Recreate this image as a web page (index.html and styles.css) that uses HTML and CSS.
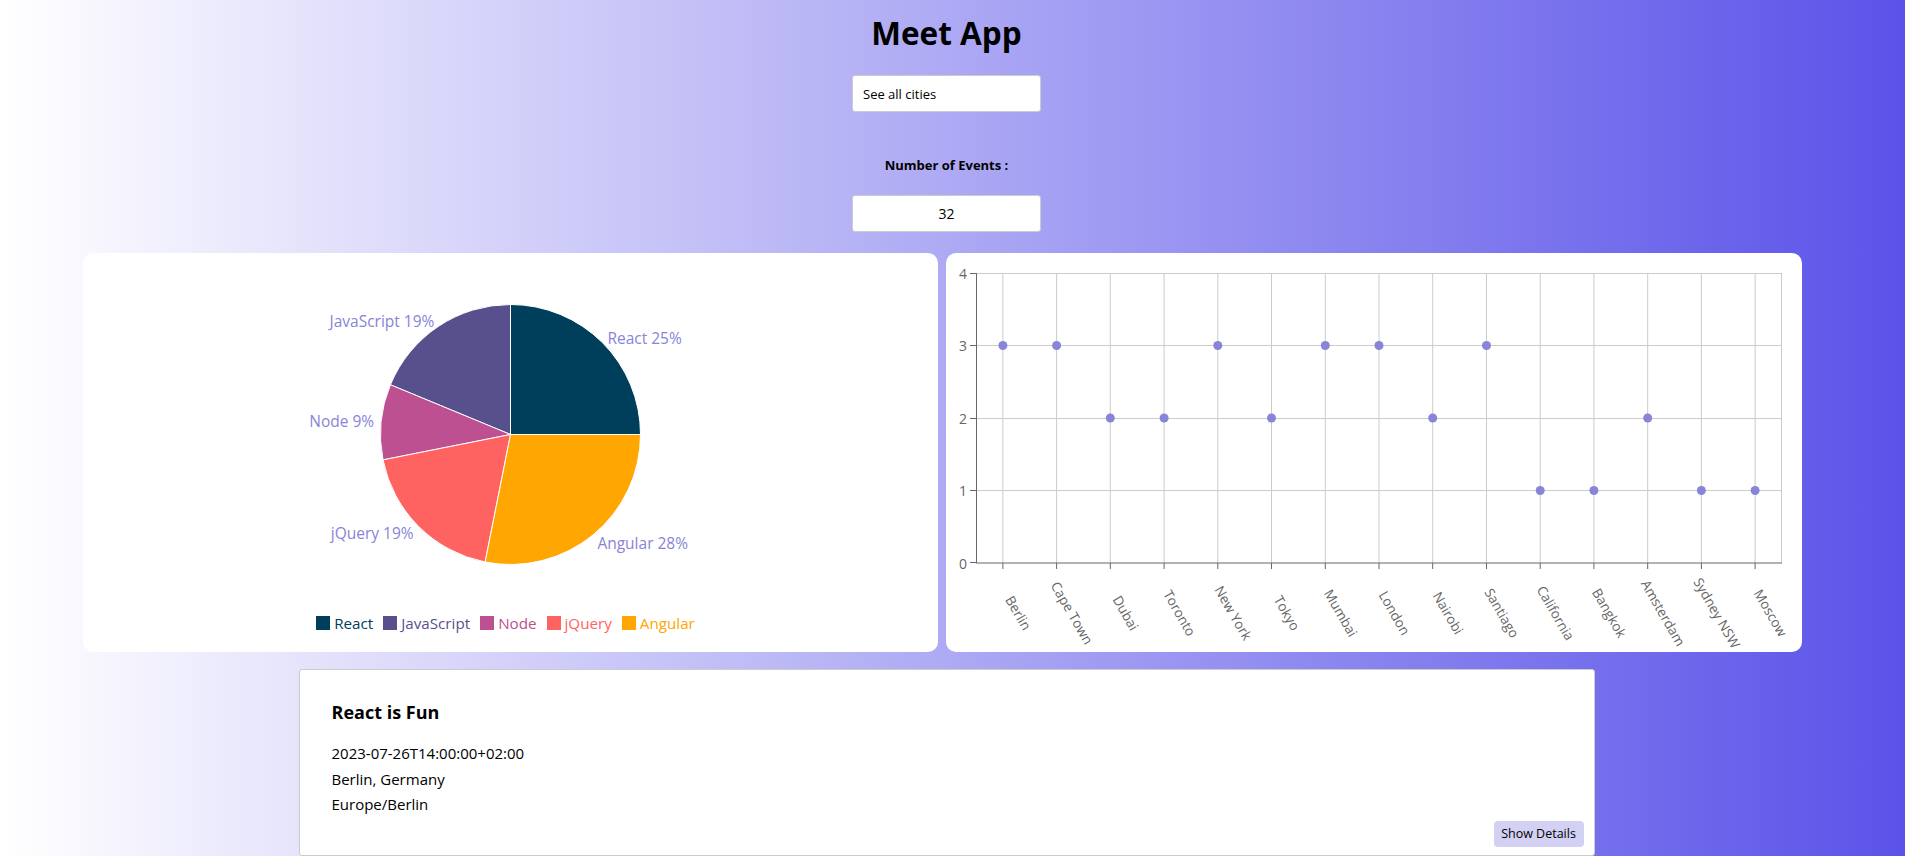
FILE: index.html
```html
<!DOCTYPE html>
<html lang="en">
<head>
<meta charset="utf-8">
<title>Meet App</title>
<link rel="stylesheet" href="styles.css">
</head>
<body>
<div class="app">
  <h1 class="title">Meet App</h1>
  <div class="city-search">
    <input class="city-input" type="text" value="See all cities">
  </div>
  <div class="noe">
    <label class="noe-label">Number of Events :</label>
    <input class="noe-input" type="text" value="32">
  </div>
  <div class="charts">
    <div class="chart-card pie-card">
      <svg class="pie-svg" width="855" height="355" viewBox="0 0 855 355">
        <g stroke="#fff" stroke-width="1">
          <path fill="#003f5c" d="M427.5,181.5 L557.5,181.5 A130,130 0 0 0 427.5,51.5 Z"/>
          <path fill="#58508d" d="M427.5,181.5 L427.5,51.5 A130,130 0 0 0 307.4,131.75 Z"/>
          <path fill="#bc5090" d="M427.5,181.5 L307.4,131.75 A130,130 0 0 0 300,206.86 Z"/>
          <path fill="#ff6361" d="M427.5,181.5 L300,206.86 A130,130 0 0 0 402.14,309 Z"/>
          <path fill="#ffa600" d="M427.5,181.5 L402.14,309 A130,130 0 0 0 557.5,181.5 Z"/>
        </g>
        <g class="pie-label">
          <text x="524.4" y="84.6" text-anchor="start">React 25%</text>
          <text x="351.4" y="67.6" text-anchor="end">JavaScript 19%</text>
          <text x="291.2" y="168.1" text-anchor="end">Node 9%</text>
          <text x="330.6" y="280" text-anchor="end">jQuery 19%</text>
          <text x="514.4" y="290" text-anchor="start">Angular 28%</text>
        </g>
      </svg>
      <ul class="legend">
        <li class="legend-item lg-react"><span class="legend-icon"></span>React</li>
        <li class="legend-item lg-js"><span class="legend-icon"></span>JavaScript</li>
        <li class="legend-item lg-node"><span class="legend-icon"></span>Node</li>
        <li class="legend-item lg-jquery"><span class="legend-icon"></span>jQuery</li>
        <li class="legend-item lg-angular"><span class="legend-icon"></span>Angular</li>
      </ul>
    </div>
    <div class="chart-card scatter-card">
      <svg class="scatter-svg" width="856" height="399" viewBox="0 0 856 399">
        <g class="grid" stroke="#ccc" stroke-width="1">
          <line x1="30" y1="20.5" x2="836" y2="20.5"/>
          <line x1="30" y1="92.5" x2="836" y2="92.5"/>
          <line x1="30" y1="165.5" x2="836" y2="165.5"/>
          <line x1="30" y1="237.5" x2="836" y2="237.5"/>
          <line x1="56.9" y1="20" x2="56.9" y2="310"/>
          <line x1="110.6" y1="20" x2="110.6" y2="310"/>
          <line x1="164.3" y1="20" x2="164.3" y2="310"/>
          <line x1="218.1" y1="20" x2="218.1" y2="310"/>
          <line x1="271.8" y1="20" x2="271.8" y2="310"/>
          <line x1="325.5" y1="20" x2="325.5" y2="310"/>
          <line x1="379.3" y1="20" x2="379.3" y2="310"/>
          <line x1="433" y1="20" x2="433" y2="310"/>
          <line x1="486.7" y1="20" x2="486.7" y2="310"/>
          <line x1="540.5" y1="20" x2="540.5" y2="310"/>
          <line x1="594.2" y1="20" x2="594.2" y2="310"/>
          <line x1="647.9" y1="20" x2="647.9" y2="310"/>
          <line x1="701.7" y1="20" x2="701.7" y2="310"/>
          <line x1="755.4" y1="20" x2="755.4" y2="310"/>
          <line x1="809.1" y1="20" x2="809.1" y2="310"/>
          <line x1="835.5" y1="20" x2="835.5" y2="310"/>
        </g>
        <g class="axis" stroke="#666" stroke-width="1">
          <line x1="30.5" y1="20" x2="30.5" y2="310"/>
          <line x1="30" y1="310" x2="836" y2="310"/>
          <line x1="24" y1="20.5" x2="30" y2="20.5"/>
          <line x1="24" y1="92.5" x2="30" y2="92.5"/>
          <line x1="24" y1="165.5" x2="30" y2="165.5"/>
          <line x1="24" y1="237.5" x2="30" y2="237.5"/>
          <line x1="24" y1="309.5" x2="30" y2="309.5"/>
          <line x1="56.9" y1="310" x2="56.9" y2="316"/>
          <line x1="110.6" y1="310" x2="110.6" y2="316"/>
          <line x1="164.3" y1="310" x2="164.3" y2="316"/>
          <line x1="218.1" y1="310" x2="218.1" y2="316"/>
          <line x1="271.8" y1="310" x2="271.8" y2="316"/>
          <line x1="325.5" y1="310" x2="325.5" y2="316"/>
          <line x1="379.3" y1="310" x2="379.3" y2="316"/>
          <line x1="433" y1="310" x2="433" y2="316"/>
          <line x1="486.7" y1="310" x2="486.7" y2="316"/>
          <line x1="540.5" y1="310" x2="540.5" y2="316"/>
          <line x1="594.2" y1="310" x2="594.2" y2="316"/>
          <line x1="647.9" y1="310" x2="647.9" y2="316"/>
          <line x1="701.7" y1="310" x2="701.7" y2="316"/>
          <line x1="755.4" y1="310" x2="755.4" y2="316"/>
          <line x1="809.1" y1="310" x2="809.1" y2="316"/>
        </g>
        <g class="y-label">
          <text x="21" y="20.5">4</text>
          <text x="21" y="92.5">3</text>
          <text x="21" y="165">2</text>
          <text x="21" y="237.5">1</text>
          <text x="21" y="310">0</text>
        </g>
        <g class="x-label">
          <text x="72.4" y="360" transform="rotate(60 72.4 360)">Berlin</text>
          <text x="126.1" y="360" transform="rotate(60 126.1 360)">Cape Town</text>
          <text x="179.8" y="360" transform="rotate(60 179.8 360)">Dubai</text>
          <text x="233.6" y="360" transform="rotate(60 233.6 360)">Toronto</text>
          <text x="287.3" y="360" transform="rotate(60 287.3 360)">New York</text>
          <text x="341" y="360" transform="rotate(60 341 360)">Tokyo</text>
          <text x="394.8" y="360" transform="rotate(60 394.8 360)">Mumbai</text>
          <text x="448.5" y="360" transform="rotate(60 448.5 360)">London</text>
          <text x="502.2" y="360" transform="rotate(60 502.2 360)">Nairobi</text>
          <text x="556" y="360" transform="rotate(60 556 360)">Santiago</text>
          <text x="609.7" y="360" transform="rotate(60 609.7 360)">California</text>
          <text x="663.4" y="360" transform="rotate(60 663.4 360)">Bangkok</text>
          <text x="717.2" y="360" transform="rotate(60 717.2 360)">Amsterdam</text>
          <text x="770.9" y="360" transform="rotate(60 770.9 360)">Sydney NSW</text>
          <text x="824.6" y="360" transform="rotate(60 824.6 360)">Moscow</text>
        </g>
        <g fill="#8884d8">
          <circle cx="56.9" cy="92.5" r="4.5"/>
          <circle cx="110.6" cy="92.5" r="4.5"/>
          <circle cx="164.3" cy="165" r="4.5"/>
          <circle cx="218.1" cy="165" r="4.5"/>
          <circle cx="271.8" cy="92.5" r="4.5"/>
          <circle cx="325.5" cy="165" r="4.5"/>
          <circle cx="379.3" cy="92.5" r="4.5"/>
          <circle cx="433" cy="92.5" r="4.5"/>
          <circle cx="486.7" cy="165" r="4.5"/>
          <circle cx="540.5" cy="92.5" r="4.5"/>
          <circle cx="594.2" cy="237.5" r="4.5"/>
          <circle cx="647.9" cy="237.5" r="4.5"/>
          <circle cx="701.7" cy="165" r="4.5"/>
          <circle cx="755.4" cy="237.5" r="4.5"/>
          <circle cx="809.1" cy="237.5" r="4.5"/>
        </g>
      </svg>
    </div>
  </div>
  <ul class="event-list">
    <li class="event">
      <h2 class="event-title">React is Fun</h2>
      <p class="event-info event-start">2023-07-26T14:00:00+02:00</p>
      <p class="event-info">Berlin, Germany</p>
      <p class="event-info">Europe/Berlin</p>
      <button class="details-btn" type="button">Show Details</button>
    </li>
  </ul>
</div>
</body>
</html>
```
FILE: styles.css
```css
html, body {
  margin: 0;
  padding: 0;
}

body {
  min-height: 100vh;
  background: linear-gradient(to right, #ffffff 0%, #5b53e9 100%);
  font-family: "Open Sans", "Noto Sans", sans-serif;
  color: #000;
}

.app {
  width: 1893px;
  padding-bottom: 20px;
}

.title {
  margin: 11px 0 0;
  font-size: 31.5px;
  line-height: 44px;
  font-weight: 700;
  text-align: center;
}

.city-search {
  display: flex;
  justify-content: center;
  margin-top: 20px;
}

.city-input,
.noe-input {
  box-sizing: border-box;
  width: 189px;
  height: 37px;
  border: 1px solid #ccc;
  border-radius: 3px;
  background: #fff;
  font-family: "Open Sans", "Noto Sans", sans-serif;
  color: #000;
  outline: none;
}

.city-input {
  padding: 0 0 0 10px;
  font-size: 13px;
}

.noe {
  display: flex;
  flex-direction: column;
  align-items: center;
  margin-top: 44px;
}

.noe-label {
  font-size: 13px;
  font-weight: 700;
  line-height: 18px;
}

.noe-input {
  margin-top: 21px;
  padding: 0;
  text-align: center;
  font-size: 14px;
}

.charts {
  display: grid;
  grid-template-columns: 855px 856px;
  gap: 8px;
  margin: 21px 0 0 83px;
}

.chart-card {
  background: #fff;
  border-radius: 10px;
  height: 399px;
  overflow: hidden;
}

.pie-svg,
.scatter-svg {
  display: block;
}

.pie-label text {
  font-family: "Open Sans", "Noto Sans", sans-serif;
  font-size: 15.5px;
  fill: #8884d8;
  dominant-baseline: central;
}

.legend {
  display: flex;
  justify-content: center;
  margin: 3px 0 0;
  padding: 0 10px 0 0;
  list-style: none;
  font-size: 15.2px;
  line-height: 24px;
}

.legend-item {
  display: flex;
  align-items: center;
  margin: 0 5px;
}

.legend-icon {
  width: 14px;
  height: 14px;
  margin-right: 4px;
}

.lg-react { color: #003f5c; }
.lg-react .legend-icon { background: #003f5c; }
.lg-js { color: #58508d; }
.lg-js .legend-icon { background: #58508d; }
.lg-node { color: #bc5090; }
.lg-node .legend-icon { background: #bc5090; }
.lg-jquery { color: #ff6361; }
.lg-jquery .legend-icon { background: #ff6361; }
.lg-angular { color: #ffa600; }
.lg-angular .legend-icon { background: #ffa600; }

.y-label text {
  font-family: "Open Sans", "Noto Sans", sans-serif;
  font-size: 14px;
  fill: #666;
  text-anchor: end;
  dominant-baseline: central;
}

.x-label text {
  font-family: "Open Sans", "Noto Sans", sans-serif;
  font-size: 13.5px;
  fill: #666;
  text-anchor: middle;
  dominant-baseline: central;
}

.event-list {
  width: 1296px;
  margin: 17px auto 0;
  padding: 0;
  list-style: none;
}

.event {
  box-sizing: border-box;
  display: flex;
  flex-direction: column;
  background: #fff;
  border: 1px solid #ccc;
  border-radius: 3px;
  padding: 30px 10px 8px 32px;
}

.event-title {
  margin: 0;
  font-size: 18px;
  line-height: 24px;
  font-weight: 700;
}

.event-info {
  margin: 0;
  font-size: 15px;
  line-height: 25.5px;
}

.event-start {
  margin-top: 17px;
}

.details-btn {
  align-self: flex-end;
  margin-top: 3px;
  width: 90px;
  height: 26px;
  padding: 0;
  border: none;
  border-radius: 4px;
  background: #d2d0f3;
  font-family: "Open Sans", "Noto Sans", sans-serif;
  font-size: 12.5px;
  color: #000;
}
```
